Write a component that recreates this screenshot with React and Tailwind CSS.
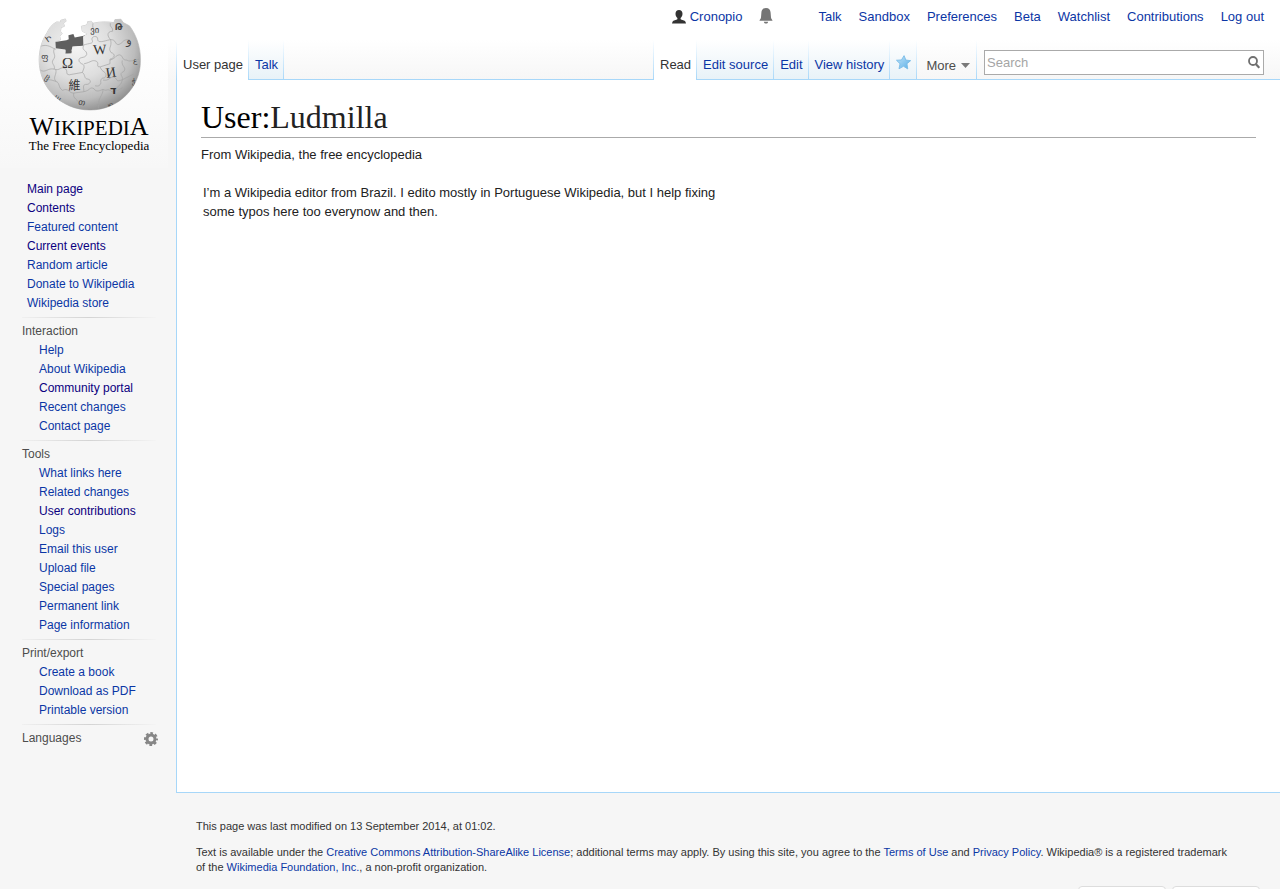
import React from "react";

const LINK = "text-[#0b36a5] hover:underline";
const VISITED = "text-[#0b0080] hover:underline";

const mainLinks = [
  ["Main page", true],
  ["Contents", true],
  ["Featured content"],
  ["Current events", true],
  ["Random article"],
  ["Donate to Wikipedia"],
  ["Wikipedia store"],
];

const portals = [
  {
    title: "Interaction",
    links: [["Help"], ["About Wikipedia"], ["Community portal", true], ["Recent changes"], ["Contact page"]],
  },
  {
    title: "Tools",
    links: [
      ["What links here"],
      ["Related changes"],
      ["User contributions", true],
      ["Logs"],
      ["Email this user"],
      ["Upload file"],
      ["Special pages"],
      ["Permanent link"],
      ["Page information"],
    ],
  },
  { title: "Print/export", links: [["Create a book"], ["Download as PDF"], ["Printable version"]] },
];

const personalLinks = ["Talk", "Sandbox", "Preferences", "Beta", "Watchlist", "Contributions", "Log out"];

const OUTLINE =
  "M133 57 L119 61 L118 67 L107 66 C94 72 84 84 78 98 C62 122 54 150 54 181 C54 265 122 331 207 331 C292 331 359 265 359 181 C359 139 345 104 326 78 L307 68 L300 58 L282 59 L279 68 C258 65 236 65 216 70 L211 64 L200 65 L198 75 L181 79 L184 94 L200 102 L186 110 L187 138 L154 140 L151 161 L132 161 L133 149 L104 145 L103 124 L118 120 L116 109 L123 101 L118 94 L120 83 L130 79 L127 69 L135 64 Z";

function Globe() {
  return (
    <svg viewBox="0 0 450 340" className="ml-3.5 h-[113px] w-[150px] shrink-0" aria-hidden="true">
      <defs>
        <radialGradient id="ball" cx="0.38" cy="0.32" r="0.74">
          <stop offset="0" stopColor="#f4f4f4" />
          <stop offset="0.45" stopColor="#dedede" />
          <stop offset="0.75" stopColor="#bcbcbc" />
          <stop offset="1" stopColor="#828282" />
        </radialGradient>
        <clipPath id="ballClip">
          <path d={OUTLINE} />
        </clipPath>
      </defs>
      <path d={OUTLINE} fill="none" stroke="#b5b5b5" strokeWidth="2" />
      <path d="M101 126 L136 121 L143 118 L142 106 L157 102 L161 113 L192 107 L188 138 L155 141 L151 151 L155 160 L133 163 L134 151 L103 149 Z" fill="#5f5f5f" />
      <g clipPath="url(#ballClip)">
        <rect x="50" y="50" width="312" height="285" fill="url(#ball)" />
        <g fill="none" stroke="#a3a3a3" strokeWidth="2">
          <path d="M56 140 C80 130 92 145 104 148" />
          <path d="M100 146 C92 160 108 166 96 180 C88 192 104 196 99 208 C80 203 72 222 56 210" />
          <path d="M99 208 C118 214 116 200 130 205 C144 212 130 224 145 225 L184 218" />
          <path d="M188 136 C180 154 199 150 197 164 C192 178 171 168 174 184 C182 198 190 188 189 204 L184 218" />
          <path d="M186 136 C207 129 217 132 214 122 C207 108 232 105 230 118 C230 130 246 125 268 119" />
          <path d="M216 70 C212 92 225 88 216 102" />
          <path d="M268 70 C265 83 278 82 275 94 C255 94 260 112 269 119" />
          <path d="M268 119 C288 119 280 135 294 134 C310 126 304 119 326 119" />
          <path d="M269 119 C274 144 260 142 270 158 C286 163 281 175 267 178" />
          <path d="M189 192 C212 187 211 179 226 184 C237 192 222 202 238 201 L267 192 L267 178" />
          <path d="M267 181 C288 174 281 167 296 165 C310 169 300 181 318 181 C329 188 342 178 354 179" />
          <path d="M184 218 C194 225 188 238 201 238 C213 241 208 253 198 254 C181 252 190 268 188 276" />
          <path d="M238 202 C242 218 257 214 255 229 C250 240 242 229 239 244 C242 256 232 261 222 258" />
          <path d="M104 209 C108 225 94 232 104 245 C117 248 110 262 124 272" />
          <path d="M75 240 C94 239 101 245 104 245 M124 272 C143 263 143 281 158 280 L188 276 C209 272 205 260 219 267 C225 279 238 272 246 269" />
          <path d="M246 241 C267 244 263 231 279 232 C292 239 283 248 304 240 L338 223" />
          <path d="M304 182 C300 200 318 202 309 215 C290 222 309 231 304 240 C300 262 291 252 284 273" />
          <path d="M246 269 C257 276 258 266 268 272 C274 282 288 272 306 264" />
          <path d="M158 280 C154 300 172 295 178 320 M246 270 C246 289 230 292 232 326" />
        </g>
        <g fill="#353535" fontFamily="Liberation Serif, serif">
          <text x="123" y="205" fontSize="45">Ω</text>
          <text x="217" y="163" fontSize="42" transform="rotate(-3 238 150)">W</text>
          <text x="254" y="232" fontSize="43" transform="rotate(-9 271 217)">И</text>
          <text x="142" y="270" fontSize="36" fontFamily="Noto Sans CJK TC, sans-serif">維</text>
          <text x="267" y="283" fontSize="33" fontWeight="bold" fontFamily="DejaVu Sans, sans-serif">ד</text>
        </g>
        <g fill="#444" fontFamily="DejaVu Sans, sans-serif" fontSize="26" textAnchor="middle">
          <text x="221" y="98">ვი</text>
          <text x="293" y="90" fontWeight="bold">Թ</text>
          <text x="324" y="133" fontSize="34">و</text>
          <text x="83" y="125" transform="rotate(-35 83 117)">Ի</text>
          <text x="71" y="182">ფ</text>
          <text x="76" y="246" transform="rotate(35 76 238)">ჱ</text>
          <text x="111" y="302" fontSize="22" transform="rotate(35 111 294)">ш</text>
          <text x="182" y="316" transform="rotate(10 182 310)">თ</text>
          <text x="343" y="190" fontSize="22">ع</text>
          <text x="338" y="252" fontSize="22">ჭ</text>
          <text x="268" y="322" fontSize="20" transform="rotate(-25 268 315)">ю</text>
        </g>
      </g>
    </svg>
  );
}

function Logo() {
  return (
    <a
      href="#main"
      aria-label="Wikipedia, The Free Encyclopedia"
      className="flex h-[168px] w-[168px] flex-col items-center bg-linear-to-b from-white from-25% to-[#f7f7f7] pl-2.5 font-['Liberation_Serif',serif] text-black"
    >
      <Globe />
      <span className="flex h-[25px] items-baseline text-[21px] leading-7">
        <span className="text-[26px]">W</span>IKIPEDI<span className="text-[26px]">A</span>
      </span>
      <span className="text-[13px] leading-4">The Free Encyclopedia</span>
    </a>
  );
}

function Rule() {
  return <div className="h-px w-[134px] bg-linear-to-r from-[#f0f0f0] via-[#d4d4d4] to-[#f4f4f4]" />;
}

function Sidebar() {
  return (
    <aside className="w-44 shrink-0 text-[12px] leading-[19px]">
      <Logo />
      <nav aria-label="Navigation" className="pt-3 pl-[22px]">
        <ul className="pb-1 pl-[5px]">
          {mainLinks.map(([name, seen]) => (
            <li key={name}>
              <a href="#nav" className={seen ? VISITED : LINK}>{name}</a>
            </li>
          ))}
        </ul>
        {portals.map((p) => (
          <section key={p.title}>
            <Rule />
            <h2 className="pt-1 text-[#4d4d4d]">{p.title}</h2>
            <ul className="pb-1 pl-[17px]">
              {p.links.map(([name, seen]) => (
                <li key={name}>
                  <a href="#nav" className={seen ? VISITED : LINK}>{name}</a>
                </li>
              ))}
            </ul>
          </section>
        ))}
        <Rule />
        <div className="flex items-center justify-between pt-1 pr-[18px]">
          <h2 className="text-[#4d4d4d]">Languages</h2>
          <button type="button" aria-label="Language settings">
            <svg viewBox="0 0 14 14" className="block size-[14px]" fill="none" stroke="#868686">
              <circle cx="7" cy="7" r="4" strokeWidth="3" />
              <circle cx="7" cy="7" r="6" strokeWidth="2" strokeDasharray="2.7 2.012" strokeDashoffset="1.35" />
            </svg>
          </button>
        </div>
      </nav>
    </aside>
  );
}

function Edge() {
  return <span className="w-px shrink-0 bg-linear-to-b from-white to-[#a7d7f9]" />;
}

function Tab({ active, children, label }) {
  return (
    <>
      <a
        href="#tab"
        aria-label={label}
        aria-current={active ? "page" : undefined}
        className={
          active
            ? "flex items-center bg-white pt-[9px] pr-[5px] pl-1.5 text-[#333]"
            : "flex items-center border-b border-[#a7d7f9] bg-linear-to-b from-white to-[#e8f2f8] pt-[10px] pr-[5px] pl-1.5 text-[#0b36a5]"
        }
      >
        {children}
      </a>
      <Edge />
    </>
  );
}

function Star() {
  return (
    <svg viewBox="0 0 16 16" className="-mt-1 h-[15px] w-[15px]">
      <defs>
        <linearGradient id="star" x1="0" y1="0" x2="1" y2="1">
          <stop offset="0" stopColor="#c3e5fa" />
          <stop offset="1" stopColor="#5aaee6" />
        </linearGradient>
      </defs>
      <path d="M8.6 .7 L10.5 5.4 L15.6 6 L11.7 9.3 L12.5 14.8 L8 12 L3.2 14.7 L4.3 9.3 L.5 5.6 L5.8 5.3 Z" fill="url(#star)" stroke="#7cbde8" />
    </svg>
  );
}

function Header() {
  return (
    <header className="text-[13px]">
      <div className="flex h-10 items-start justify-end gap-[17px] pt-2 pr-4 leading-[18px]">
        <a href="#user" className={"flex items-center gap-1 " + LINK}>
          <svg viewBox="0 0 14 14" className="size-[14px]" fill="#333">
            <path d="M7 0C4.800 0 3.500 1.500 3.500 3.700c0 2 .9 3.400 1.900 4.300v1.200C4.400 10.200 1.200 10.200.5 11.700L0 13.500h14L13.500 11.700c-.7-1.500-3.900-1.500-4.900-2.500V8c1-.9 1.900-2.300 1.900-4.300C10.500 1.500 9.200 0 7 0z" />
          </svg>
          Cronopio
        </a>
        <button type="button" aria-label="Notifications" className="mr-7">
          <svg viewBox="0 0 14 16" className="block h-4 w-[14px]" fill="#757575">
            <path d="M7 0C4 0 2.600 2 2.400 4.500L2 9.500C1.900 11 .5 11.500.5 12.800h13c0-1.300-1.400-1.800-1.500-3.300l-.4-5C11.400 2 10 0 7 0zM4.800 13.700h4.400C8.800 16.200 5.200 16.200 4.800 13.700z" />
          </svg>
        </button>
        {personalLinks.map((name) => (
          <a key={name} href="#personal" className={LINK}>{name}</a>
        ))}
      </div>
      <div className="flex h-10 bg-linear-to-b from-white to-[#f6f6f6]">
        <nav aria-label="Namespaces" className="flex">
          <Edge />
          <Tab active>User page</Tab>
          <Tab>Talk</Tab>
        </nav>
        <div className="grow border-b border-[#a7d7f9]" />
        <nav aria-label="Views" className="flex">
          <Edge />
          <Tab active>Read</Tab>
          <Tab>Edit source</Tab>
          <Tab>Edit</Tab>
          <Tab>View history</Tab>
          <Tab label="Watch this page"><Star /></Tab>
          <button type="button" className="flex items-center gap-[5px] border-b border-[#a7d7f9] pt-3 pr-1.5 pl-[9px] text-[#4d4d4d]">
            More
            <svg viewBox="0 0 9 5" className="h-[5px] w-[9px]" fill="#797979"><path d="M0 0H9L4.500 5Z" /></svg>
          </button>
          <Edge />
        </nav>
        <form className="border-b border-[#a7d7f9] pt-[10px] pr-4 pl-[7px]" onSubmit={(e) => e.preventDefault()}>
          <div className="flex h-[25px] w-[280px] items-center border border-[#aaa] bg-white pr-[3px] pl-0.5">
            <input
              type="text"
              aria-label="Search"
              placeholder="Search"
              className="min-w-0 grow bg-transparent text-[13px] outline-none placeholder:text-[#a5a5a5]"
            />
            <button type="submit" aria-label="Go">
              <svg viewBox="0 0 12 13" className="block h-[13px] w-3" fill="none" stroke="#707070">
                <circle cx="5" cy="5" r="4" strokeWidth="1.800" />
                <path d="M8 8.300L11.300 11.800" strokeWidth="2.200" />
              </svg>
            </button>
          </div>
        </form>
      </div>
    </header>
  );
}

function Footer() {
  return (
    <footer className="flex flex-col pt-[26px] pr-5 pl-5 text-[11px] leading-[15px] text-[#333]">
      <p>This page was last modified on 13 September 2014, at 01:02.</p>
      <p className="pt-[11px] pr-7">
        Text is available under the <a href="#license" className={LINK}>Creative Commons Attribution-ShareAlike License</a>;
        additional terms may apply. By using this site, you agree to the <a href="#terms" className={LINK}>Terms of Use</a> and{" "}
        <a href="#privacy" className={LINK}>Privacy Policy</a>. Wikipedia® is a registered trademark of&nbsp;the{" "}
        <a href="#foundation" className={LINK}>Wikimedia Foundation, Inc.</a>, a non-profit organization.
      </p>
      <div className="mt-[11px] flex h-[3px] justify-end gap-1.5 overflow-hidden">
        <a href="#wikimedia" aria-label="Wikimedia project" className="h-[31px] w-[88px] rounded-sm border border-[#ddd] bg-white" />
        <a href="#mediawiki" aria-label="Powered by MediaWiki" className="h-[31px] w-[88px] rounded-sm border border-[#ddd] bg-white" />
      </div>
    </footer>
  );
}

export default function App() {
  return (
    <div className="flex min-h-screen bg-[#f6f6f6] bg-[linear-gradient(#fff_40px,#f6f6f6_80px)] font-['Liberation_Sans',Arial,sans-serif]">
      <Sidebar />
      <div className="flex min-w-0 grow flex-col">
        <Header />
        <main className="grow border-b border-l border-[#a7d7f9] bg-white pt-[18px] pr-6 pl-6 text-[13px] leading-[19px] text-[#222]">
          <h1 className="border-b border-[#aaa] font-['Liberation_Serif',serif] text-[32px] leading-[39px] text-black">
            User:<span className="text-[#222]">Ludmilla</span>
          </h1>
          <p className="pt-[7px]">From Wikipedia, the free encyclopedia</p>
          <p className="max-w-[530px] pt-[19px] pl-0.5">
            I’m a Wikipedia editor from Brazil. I edito mostly in Portuguese Wikipedia, but I help fixing some typos here too
            everynow and then.
          </p>
        </main>
        <Footer />
      </div>
    </div>
  );
}
